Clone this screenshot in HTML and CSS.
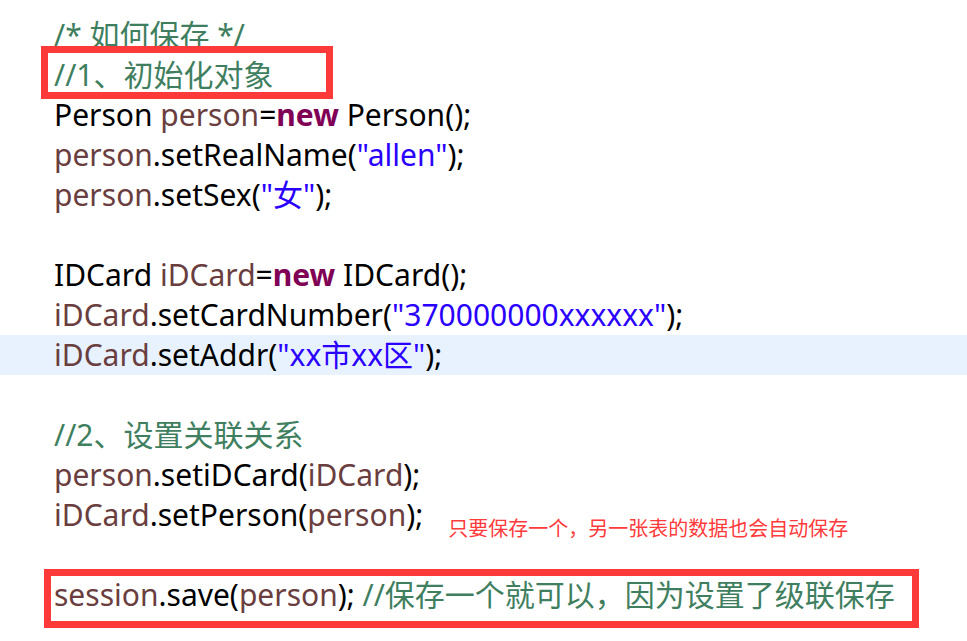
FILE: index.html
```html
<!DOCTYPE html>
<html lang="zh-CN">
<head>
<meta charset="UTF-8">
<title>如何保存</title>
<link rel="stylesheet" href="styles.css">
</head>
<body>
<div class="editor">
  <div class="line"><span class="cm">/* 如何保存 */</span></div>
  <div class="line"><span class="cm">//1、初始化对象</span></div>
  <div class="line">Person <span class="var">person</span>=<span class="kw">new</span> Person();</div>
  <div class="line"><span class="var">person</span>.setRealName(<span class="str">"allen"</span>);</div>
  <div class="line"><span class="var">person</span>.setSex(<span class="str">"女"</span>);</div>
  <div class="line"></div>
  <div class="line">IDCard <span class="var">iDCard</span>=<span class="kw">new</span> IDCard();</div>
  <div class="line"><span class="var">iDCard</span>.setCardNumber(<span class="str">"370000000xxxxxx"</span>);</div>
  <div class="line current"><span class="var">iDCard</span>.setAddr(<span class="str">"xx市xx区"</span>);</div>
  <div class="line"></div>
  <div class="line"><span class="cm">//2、设置关联关系</span></div>
  <div class="line"><span class="var">person</span>.setiDCard(<span class="var">iDCard</span>);</div>
  <div class="line"><span class="var">iDCard</span>.setPerson(<span class="var">person</span>);<span class="note">只要保存一个，另一张表的数据也会自动保存</span></div>
  <div class="line"></div>
  <div class="line"><span class="var">session</span>.save(<span class="var">person</span>); <span class="cm">//保存一个就可以，因为设置了级联保存</span></div>

  <div class="mark mark-init"></div>
  <div class="mark mark-save"></div>
</div>
</body>
</html>
```

FILE: styles.css
```css
* {
  margin: 0;
  padding: 0;
  box-sizing: border-box;
}

body {
  width: 967px;
  height: 641px;
  background: #fff;
  overflow: hidden;
  font-family: "Noto Sans", "Noto Sans CJK SC", sans-serif;
}

/* code area */
.editor {
  position: relative;
  padding-top: 15px;
  height: 100%;
}

.line {
  height: 40px;
  line-height: 40px;
  padding-left: 54px;
  font-size: 30px;
  color: #000;
  white-space: pre;
}

.line.current {
  background: #e8f2fe;
}

.cm {
  color: #3f7f5f;
}

.var {
  color: #6a3e3e;
}

.kw {
  color: #7f0055;
  font-weight: bold;
}

.str {
  color: #2a00ff;
}

/* hand written note */
.note {
  margin-left: 25px;
  font-size: 20px;
  color: #ff3b3b;
  vertical-align: -10px;
}

/* red boxes drawn over the code */
.mark {
  position: absolute;
  border: 7px solid #fd3a3a;
}

.mark-init {
  left: 41px;
  top: 46px;
  width: 292px;
  height: 53px;
}

.mark-save {
  left: 44px;
  top: 569px;
  width: 875px;
  height: 59px;
}
```
